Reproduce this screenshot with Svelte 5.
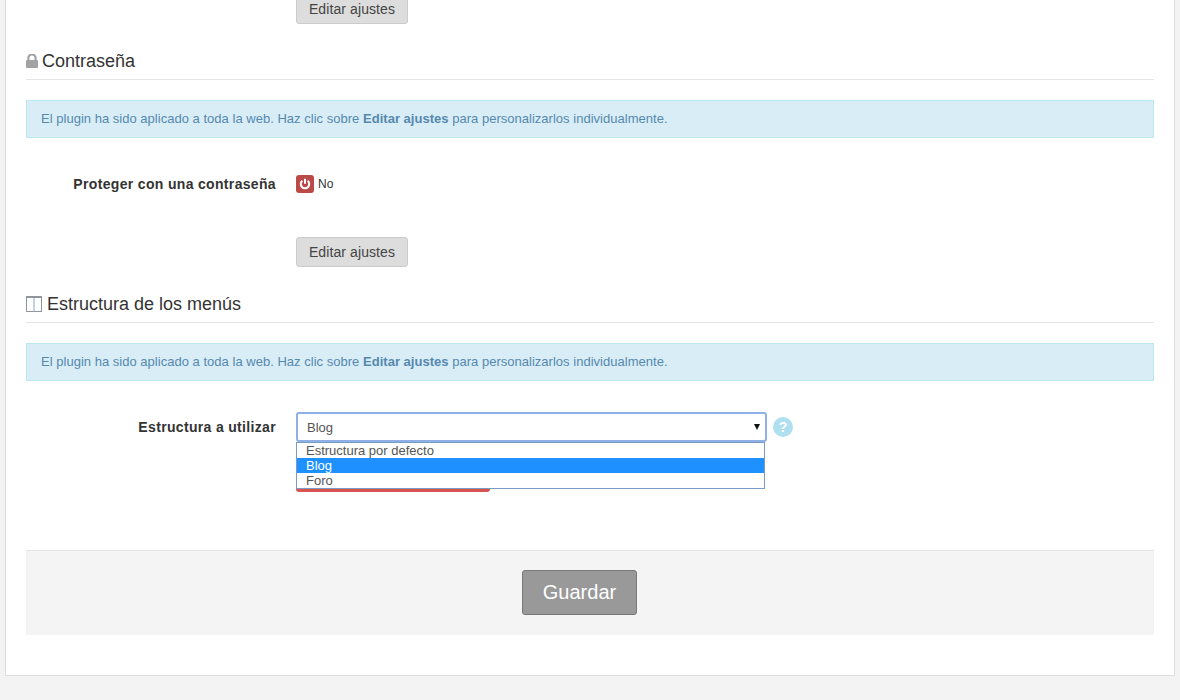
<script>
  const options = ['Estructura por defecto', 'Blog', 'Foro'];
  let selected = $state('Blog');
</script>

<div class="page">
  <div class="card">
    <div class="actions first"><button class="btn">Editar ajustes</button></div>

    <h3 class="heading">
      <svg width="12" height="14" viewBox="0 0 12 14" aria-hidden="true">
        <path d="M2.4 7V4a3.6 3.6 0 0 1 7.2 0V7" fill="none" stroke="#a2a2a4" stroke-width="2.2" />
        <rect x="0" y="6" width="12" height="8" rx="1" fill="#a2a2a4" />
      </svg>
      Contraseña
    </h3>
    <div class="alert">El plugin ha sido aplicado a toda la web. Haz clic sobre <b>Editar ajustes</b> para personalizarlos individualmente.</div>

    <div class="row switch-row">
      <span class="label">Proteger con una contraseña</span>
      <span class="power">
        <svg width="12" height="12" viewBox="0 0 12 12" aria-hidden="true">
          <path d="M3.4 2.8a4.2 4.2 0 1 0 5.2 0" fill="none" stroke="#fff" stroke-width="2" />
          <path d="M6 0.8v5" stroke="#fff" stroke-width="2" />
        </svg>
      </span>
      <span class="state">No</span>
    </div>

    <div class="actions"><button class="btn">Editar ajustes</button></div>

    <h3 class="heading">
      <svg class="ico-cols" width="16" height="16" viewBox="0 0 16 16" aria-hidden="true">
        <rect x="0.5" y="0.5" width="15" height="15" fill="none" stroke="#8f959b" />
        <path d="M8 1v15" stroke="#8fa6c4" />
        <path d="M0 1h16" stroke="#8f959b" stroke-width="2" />
      </svg>
      Estructura de los menús
    </h3>
    <div class="alert">El plugin ha sido aplicado a toda la web. Haz clic sobre <b>Editar ajustes</b> para personalizarlos individualmente.</div>

    <div class="row select-row">
      <span class="label">Estructura a utilizar</span>
      <div class="select-wrap">
        <div class="select">{selected}<i class="caret"></i></div>
        <ul class="options">
          {#each options as o}
            <li class:active={o === selected}>{o}</li>
          {/each}
        </ul>
      </div>
      <span class="help">?</span>
    </div>
    <div class="danger-row"><button class="btn-danger"></button></div>

    <div class="footer"><button class="btn-save">Guardar</button></div>
  </div>
</div>

<style>
  :global(body) {
    background: #f3f3f3;
    font-family: "Liberation Sans", Arial, sans-serif;
    color: #333;
  }

  .page {
    height: 700px;
    overflow: hidden;
  }

  .card {
    margin: -6px 5px 0;
    padding: 0 20px 40px;
    background: #fff;
    border: 1px solid #ddd;
    border-top: 0;
    height: 682px;
    box-sizing: border-box;
  }

  .actions {
    padding-left: 270px;
    height: 30px;
  }

  .btn {
    width: 112px;
    height: 30px;
    padding: 0;
    font: 14px "Liberation Sans", Arial, sans-serif;
    letter-spacing: 0.1px;
    color: #444;
    background: #ddd;
    border: 1px solid #ccc;
    border-radius: 3px;
  }

  .heading {
    margin: 25px 0 20px;
    display: flex;
    align-items: center;
    gap: 4px;
    font-size: 18px;
    font-weight: 400;
    color: #333;
    border-bottom: 1px solid #e5e5e5;
    height: 25px;
    padding-bottom: 5px;
  }

  .heading svg {
    margin-bottom: 2px;
  }

  .ico-cols {
    margin-right: 1px;
  }

  .alert {
    height: 38px;
    box-sizing: border-box;
    padding: 0 14px;
    line-height: 35px;
    font-size: 13px;
    letter-spacing: 0.02px;
    color: #5589ae;
    background: #d9edf7;
    border: 1px solid #bce8f1;
  }

  .row {
    display: flex;
    align-items: center;
  }

  .label {
    width: 250px;
    text-align: right;
    margin-right: 20px;
    font-size: 14px;
    font-weight: 700;
    letter-spacing: 0.33px;
    color: #333;
  }

  .switch-row {
    height: 18px;
    margin: 37px 0 44px;
  }

  .power {
    width: 18px;
    height: 18px;
    border-radius: 3px;
    background: #b94a48;
    display: flex;
    align-items: center;
    justify-content: center;
  }

  .state {
    margin-left: 4px;
    font-size: 12px;
  }

  .select-row {
    height: 30px;
    margin-top: 31px;
  }

  .select-wrap {
    position: relative;
    width: 471px;
  }

  .select {
    height: 30px;
    box-sizing: border-box;
    padding: 0 9px;
    line-height: 28px;
    font-size: 13px;
    color: #555;
    border: 2px solid #8fb0e6;
    border-radius: 3px;
    position: relative;
  }

  .caret {
    position: absolute;
    right: 5px;
    top: 10px;
    border: 3px solid transparent;
    border-top: 6px solid #111;
    border-bottom: 0;
  }

  .options {
    position: absolute;
    z-index: 2;
    top: 30px;
    left: 0;
    width: 469px;
    box-sizing: border-box;
    margin: 0;
    padding: 0;
    list-style: none;
    background: #fff;
    border: 1px solid #7a9cc4;
    font-size: 13px;
    color: #555;
  }

  .options li {
    height: 15px;
    line-height: 15px;
    padding-left: 9px;
  }

  .options li.active {
    background: #1e90ff;
    color: #fff;
  }

  .help {
    margin-left: 6px;
    width: 20px;
    height: 20px;
    border-radius: 50%;
    background: #aee0f0;
    color: #fff;
    font-size: 14px;
    font-weight: 700;
    line-height: 20px;
    text-align: center;
  }

  .danger-row {
    padding-left: 270px;
    margin-top: 20px;
    height: 30px;
  }

  .btn-danger {
    display: block;
    width: 194px;
    height: 30px;
    padding: 0;
    background: #d9534f;
    border: 0;
    border-radius: 3px;
  }

  .footer {
    margin-top: 58px;
    height: 85px;
    box-sizing: border-box;
    padding: 19px 21px 0 0;
    background: #f4f4f4;
    border-top: 1px solid #e5e5e5;
    display: flex;
    justify-content: center;
    align-items: flex-start;
  }

  .btn-save {
    width: 115px;
    height: 45px;
    padding: 0;
    font: 20px "Liberation Sans", Arial, sans-serif;
    color: #fff;
    background: #999;
    border: 1px solid #777;
    border-radius: 3px;
  }
</style>
